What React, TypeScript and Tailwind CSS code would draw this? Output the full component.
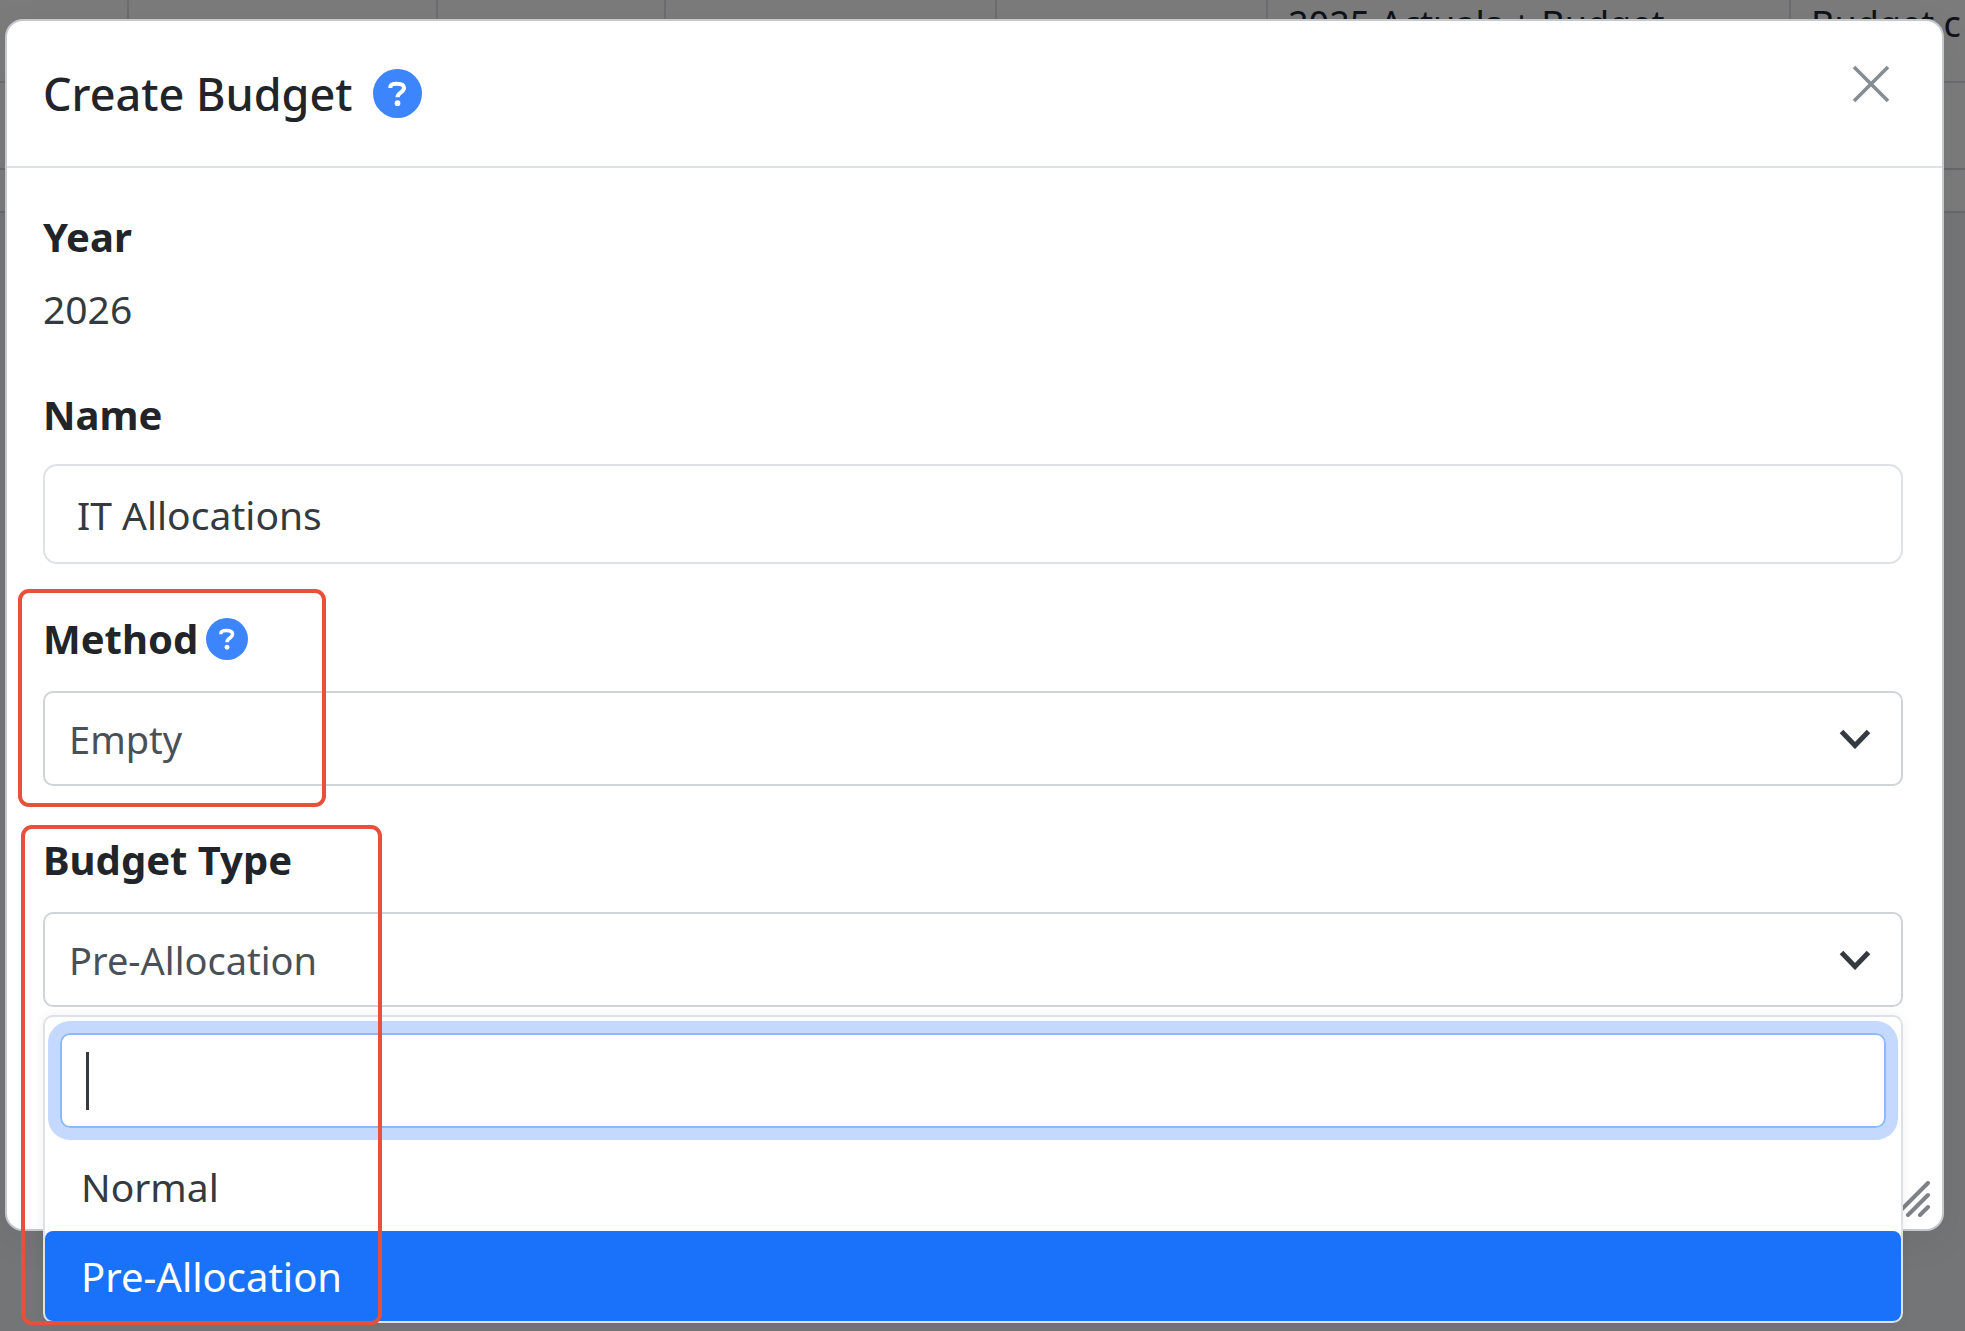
import { useState } from "react";

const backdropColumns = ["", "", "", "", "", "2025 Actuals + Budget", "Budget c"];

const HelpIcon = ({ className }: { className: string }) => (
  <svg viewBox="0 0 48 48" className={className} aria-hidden="true">
    <circle cx="24" cy="24" r="24" fill="#3d85fd" />
    <path
      d="M17 18.500v-.8c0-2.200 2.300-3.300 6.500-3.300s6.900 1.300 6.900 4.300c0 4.300-6.400 4.200-6.400 9"
      fill="none"
      stroke="#fff"
      strokeWidth="4"
    />
    <circle cx="24" cy="33.500" r="2.800" fill="#fff" />
  </svg>
);

const Chevron = () => (
  <svg
    viewBox="0 0 32 20"
    className="pointer-events-none absolute right-8 top-[38px] h-5 w-8"
    aria-hidden="true">
    <path d="M2.500 2.500 16 16.500 29.500 2.500" fill="none" stroke="#343a40" strokeWidth="5" />
  </svg>
);

const BackdropTable = () => (
  <table className="absolute inset-x-0 top-0 w-full table-fixed border-collapse text-left text-[36px] leading-[48px] text-[#101318]">
    <colgroup>
      <col className="w-[128px]" />
      <col className="w-[309px]" />
      <col className="w-[228px]" />
      <col className="w-[331px]" />
      <col className="w-[271px]" />
      <col className="w-[523px]" />
      <col />
    </colgroup>
    <tbody className="bg-[#7b7b7b]">
      <tr className="h-[82px]">
        {backdropColumns.map((text, index) => (
          <td
            key={index}
            className="whitespace-nowrap border-b-2 border-r-2 border-[#6b6d70] pl-5 align-top last:border-r-0">
            {text}
          </td>
        ))}
      </tr>
      <tr className="h-[87px]">
        <td colSpan={7} className="border-b-2 border-[#66686b]"></td>
      </tr>
      <tr className="h-[43px]">
        <td colSpan={7} className="border-b-2 border-[#66686b]"></td>
      </tr>
    </tbody>
  </table>
);

export default function App() {
  const [name, setName] = useState("IT Allocations");
  const [type, setType] = useState("Pre-Allocation");
  const [query, setQuery] = useState("");

  return (
    <div className="relative min-h-screen overflow-hidden bg-[#747577] font-['Noto_Sans','Open_Sans',sans-serif] text-[39px] leading-[56px] text-[#212529]">
      <BackdropTable />

      <div
        role="dialog"
        aria-labelledby="dialog-title"
        className="relative ml-[5px] mr-[21px] mt-[19px] rounded-[18px] border-2 border-[#c5c8cd] bg-white pb-[222px] shadow-[0_10px_40px_rgba(0,0,0,0.06)]">
        <header className="flex h-[147px] items-center justify-between border-b-2 border-[#dee2e6] px-9">
          <div className="flex items-center gap-5">
            <h1 id="dialog-title" className="text-[45px] font-medium leading-[56px]">
              Create Budget
            </h1>
            <button type="button" aria-label="Help with creating a budget">
              <HelpIcon className="h-[49px] w-[49px]" />
            </button>
          </div>
          <button type="button" aria-label="Close" className="mr-4 -mt-5">
            <svg viewBox="0 0 38 38" className="h-[38px] w-[38px]" aria-hidden="true">
              <path d="M2 2 36 36M36 2 2 36" stroke="#868c92" strokeWidth="3.600" />
            </svg>
          </button>
        </header>

        <svg viewBox="0 0 34 36" className="absolute bottom-3 right-3 h-9 w-[34px]" aria-hidden="true">
          <path
            d="M2 32 32 2M12 34 32 14M24 34l8-8"
            stroke="#7d8388"
            strokeWidth="4"
            strokeLinecap="round"
          />
        </svg>

        <form className="pl-9 pr-[39px] pt-[41px]">
          <h2 className="text-[40px] font-bold">Year</h2>
          <p className="mt-4 text-[#343a40]">2026</p>

          <label htmlFor="name" className="mt-[50px] block text-[40px] font-bold">
            Name
          </label>
          <input
            id="name"
            value={name}
            onChange={(e) => setName(e.target.value)}
            className="mt-[21px] block h-[100px] w-full rounded-[14px] border-2 border-[#dee2e6] px-8 text-[#343a40] outline-none"
          />

          <div className="relative mt-[47px]">
            <div className="flex items-center gap-2">
              <label htmlFor="method" className="text-[40px] font-bold">
                Method
              </label>
              <button type="button" aria-label="Help with methods">
                <HelpIcon className="h-[42px] w-[42px]" />
              </button>
            </div>
            <div className="relative mt-6">
              <select
                id="method"
                className="block h-[95px] w-full appearance-none rounded-[10px] border-2 border-[#ced4da] bg-white px-6 text-[38px] text-[#495057] outline-none">
                <option>Empty</option>
              </select>
              <Chevron />
            </div>
            <div className="pointer-events-none absolute -left-[25px] -top-[22px] h-[218px] w-[308px] rounded-[11px] border-4 border-[#e8503c]" />
          </div>

          <div className="relative mt-[46px]">
            <label htmlFor="type" className="block text-[40px] font-bold">
              Budget Type
            </label>
            <div className="relative mt-6">
              <select
                id="type"
                value={type}
                onChange={(e) => setType(e.target.value)}
                className="block h-[95px] w-full appearance-none rounded-[10px] border-2 border-[#ced4da] bg-white px-6 text-[38px] text-[#495057] outline-none">
                <option>Normal</option>
                <option>Pre-Allocation</option>
              </select>
              <Chevron />

              <div className="absolute inset-x-0 top-full mt-2 rounded-[10px] border-2 border-[#dee2e6] bg-white pt-4 shadow-[0_0_12px_rgba(0,0,0,0.06)]">
                <div className="mx-[15px] flex h-[95px] items-center rounded-[10px] border-2 border-[#8bb9fe] px-6 ring-12 ring-[#c5d9fe]">
                  <span className="h-[58px] w-[3px] bg-[#343a40]" />
                  <input
                    aria-label="Search budget types"
                    value={query}
                    onChange={(e) => setQuery(e.target.value)}
                    className="h-full min-w-0 flex-1 outline-none"
                  />
                </div>
                <ul role="listbox" aria-label="Budget types" className="mt-[13px]">
                  <li
                    role="option"
                    aria-selected="false"
                    className="px-9 pb-[14px] pt-4 leading-[60px] text-[#343a40]">
                    Normal
                  </li>
                  <li
                    role="option"
                    aria-selected="true"
                    className="rounded-lg bg-[#1b72fa] px-9 pb-[14px] pt-4 text-[40px] leading-[60px] text-white">
                    Pre-Allocation
                  </li>
                </ul>
              </div>
            </div>
            <div className="pointer-events-none absolute -left-[22px] -top-[7px] h-[500px] w-[361px] rounded-[11px] border-4 border-[#e8503c]" />
          </div>
        </form>
      </div>
    </div>
  );
}
